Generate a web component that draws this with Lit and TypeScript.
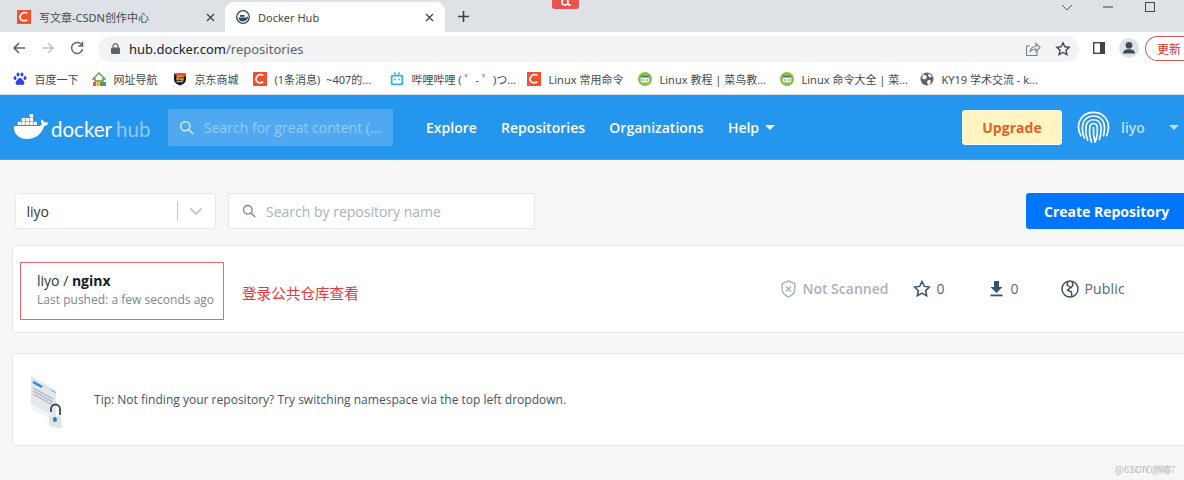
import { LitElement, html, css, svg } from "lit";
import { customElement } from "lit/decorators.js";

const csdn = html`<svg class="fav" viewBox="0 0 14 14"><rect width="14" height="14" fill="#f4502c"/><path d="M10.3 3.4A4.4 4.4 0 0 0 4 4.4c-1.3 1.8-1.2 4 .1 5.3 1.5 1.4 4.4 1.1 6.1 0" fill="none" stroke="#fff" stroke-width="1.7"/></svg>`;
const runoob = html`<svg class="fav" viewBox="0 0 14 14"><circle cx="7" cy="7" r="7" fill="#84c341"/><rect x="2.8" y="3.6" width="8.4" height="6.8" rx="1" fill="#e8eee4"/><rect x="2.8" y="3.6" width="8.4" height="1.8" fill="#566"/><path d="M5.5 7l-1 1 1 1M8.500 7l1 1-1 1" fill="none" stroke="#567" stroke-width=".7"/></svg>`;

const marks: [unknown, string][] = [
  [html`<svg class="fav" viewBox="0 0 14 14" fill="#3146d8"><ellipse cx="2" cy="6" rx="1.500" ry="2"/><ellipse cx="5" cy="2.500" rx="1.500" ry="2"/><ellipse cx="9" cy="2.500" rx="1.500" ry="2"/><ellipse cx="12" cy="6" rx="1.500" ry="2"/><path d="M7 6c-2 0-2.500 2-4 3.500C2 11 3 13.500 5 13c1-.2 3-.2 4 0 2 .5 3-2 2-3.500C9.500 8 9 6 7 6z"/></svg>`, "百度一下"],
  [html`<svg class="fav" viewBox="0 0 14 14"><path d="M1 7l6-6 6 6h-2v2H3V7z" fill="none" stroke="#5b9e3a" stroke-width="1.400"/><rect x="1" y="10" width="3" height="4" fill="#e8554a"/><rect x="4.500" y="10" width="3" height="4" fill="#f3a83c"/><rect x="8" y="10" width="3" height="4" fill="#5b9e3a"/><rect x="11" y="10" width="3" height="4" fill="#3f8fd8"/></svg>`, "网址导航"],
  [html`<svg class="fav" viewBox="0 0 14 14"><path d="M1 1.500h12v6c0 3-3 5-6 6-3-1-6-3-6-6z" fill="#111a3d"/><path d="M1 1.500h12v3L4 5z" fill="#e8452c"/><path d="M10.500 4.500H5L4 7h6l-1 2.500H3.500" fill="none" stroke="#f5a623" stroke-width="1.500"/></svg>`, "京东商城"],
  [csdn, "(1条消息)\u00a0 ~407的..."],
  [html`<svg class="fav" viewBox="0 0 14 14"><rect x=".7" y="2.700" width="12.600" height="10.600" rx="2" fill="#2fb3e6"/><rect x="2.500" y="4.500" width="9" height="7" rx="1" fill="#fff"/><path d="M4 .5l2 2M10 .5l-2 2" stroke="#2fb3e6" stroke-width="1.200"/><circle cx="5" cy="7.500" r=".9" fill="#2fb3e6"/><circle cx="9" cy="7.500" r=".9" fill="#2fb3e6"/></svg>`, "哔哩哔哩 ( ゜- ゜)つ..."],
  [csdn, "Linux 常用命令"],
  [runoob, "Linux 教程 | 菜鸟教..."],
  [runoob, "Linux 命令大全 | 菜..."],
  [html`<svg class="fav" viewBox="0 0 14 14"><circle cx="7" cy="7" r="6.500" fill="#5f6368"/><path d="M3 2.500l3 1 1 2-2 2-3-1zM8 8l3 .5-1 4-2 .5-1-3zM9 1.500l3 3-2 1-2-2z" fill="#fff"/></svg>`, "KY19 学术交流 - k..."],
];

const whale = svg`<svg class="whale" viewBox="0 0 38 27" fill="#fff">
  <path d="M1 12.500h26.500c1.700 0 2.800-.8 3.200-2.300-1.300-1-1.500-3.300-.6-5 1.400.8 2.300 2 2.800 3.400 1.400-.4 3-.2 4.400.7-.7 2-2.500 3.100-4.400 3.200-2.400 7.800-8 13.700-18.400 13.700C6 26.200 .2 20.500 1 12.500z"/>
  <path d="M5 8h3.600v3.400H5zM9.200 8h3.600v3.400H9.200zM13.400 8H17v3.400h-3.600zM17.600 8h3.600v3.400h-3.600zM21.800 8h3.600v3.400h-3.600zM9.200 4h3.600v3.400H9.200zM13.400 4H17v3.400h-3.600zM17.600 4h3.600v3.400h-3.600zM17.600 0h3.600v3.400h-3.600z"/>
</svg>`;

const fingerprint = svg`<svg class="print" viewBox="0 0 34 36" preserveAspectRatio="none" fill="none" stroke="#fff" stroke-width="1.700" stroke-linecap="round">
  <path d="M4 27C1.500 22 1 16 2.500 11.500 5 5 10.500 1.500 17 1.500S29 5 31.500 11.500c1.500 4.500 1 10.500-1 15.500"/>
  <path d="M7.500 29.500C5.500 24 5 18 6.300 13.500 8 8 12 5.500 17 5.500S26 8 27.700 13.500c1 4 .8 8.500-.5 13.500"/>
  <path d="M11 32c-1.700-5-2.400-11-1.500-16 .8-4.300 3.500-6.500 7.500-6.500s6.700 2.200 7.500 6.500c.7 4.500 0 10-1.500 15"/>
  <path d="M15 34c-1.600-5-2.500-11-1.800-16.500.3-2.300 1.700-3.800 3.800-3.800s3.500 1.500 3.800 3.800c.6 5-.2 10.500-1.800 15.500"/>
  <path d="M17 18c-.3 5 .3 11 1.500 16"/>
</svg>`;

const search = (c: string, w: number) => html`<svg class="mag" style="width:${w}px;height:${w}px" viewBox="0 0 18 18" fill="none" stroke=${c} stroke-width="1.800"><circle cx="7.500" cy="7.500" r="5.500"/><path d="M11.500 11.500L16.500 16.500" stroke-linecap="round"/></svg>`;

@customElement("app-root")
export class AppRoot extends LitElement {
  static styles = css`
    :host { display: block; width: 1184px; height: 480px; overflow: hidden; position: relative; background: #f7f7f7; font-family: "Open Sans", "Noto Sans CJK SC", sans-serif; }
    .fav { width: 14px; height: 14px; flex: none; }
    .chrome-text { font-family: "Noto Sans", "Noto Sans CJK SC", sans-serif; }

    .tabs { height: 32px; background: #dee1e6; display: flex; align-items: flex-end; font-size: 11px; color: #45494e; }
    .tab { height: 30px; display: flex; align-items: center; box-sizing: border-box; }
    .t1 { width: 225px; padding: 0 10px 0 17px; gap: 8px; }
    .t2 { width: 220px; padding: 0 11px 0 11px; gap: 8px; background: #fff; border-radius: 9px 9px 0 0; }
    .tab span { flex: 1; white-space: nowrap; }
    .x { width: 9px; height: 9px; flex: none; }
    .plus { width: 13px; height: 13px; margin: 0 0 9px 12px; flex: none; }
    .win { margin-left: auto; align-self: flex-start; display: flex; align-items: center; padding: 2px 29px 0 0; height: 10px; }
    .win .mn { margin: 0 32px 0 30px; }
    .badge { position: absolute; left: 552px; top: -5px; width: 27px; height: 14px; background: #e8534f; border-radius: 3px; display: flex; justify-content: center; }

    .toolbar { height: 32px; background: #fff; display: flex; align-items: center; }
    .nav { display: flex; align-items: center; gap: 13px; padding-left: 11px; width: 98px; box-sizing: border-box; flex: none; }
    .nav svg { width: 16px; height: 16px; flex: none; }
    .addr { width: 981px; height: 26px; margin-top: 1px; border-radius: 13px; background: #f1f3f4; display: flex; align-items: center; padding: 0 8px 0 13px; box-sizing: border-box; font-size: 13px; color: #202124; flex: none; }
    .addr .lock { width: 9px; height: 11px; margin-right: 9px; flex: none; }
    .addr i { font-style: normal; color: #5f6368; }
    .addr .tools { margin-left: auto; display: flex; gap: 14px; align-items: center; }
    .addr .tools svg { width: 16px; height: 16px; }
    .panel { width: 12px; height: 12px; margin-left: 14px; flex: none; }
    .avatar { width: 20px; height: 20px; margin-left: 14px; flex: none; }
    .update { width: 60px; height: 25px; margin: 1px 0 0 6px; flex: none; border: 1px solid #d9534f; border-right: 0; border-radius: 13px 0 0 13px; box-sizing: border-box; font-size: 12px; color: #d93025; padding-left: 11px; display: flex; align-items: center; font-family: "Noto Sans CJK SC", sans-serif; }

    .marks { height: 30px; background: #fff; border-bottom: 1px solid #d3dce3; display: flex; align-items: center; padding-left: 13px; font-size: 11px; color: #45494e; white-space: nowrap; }
    .mark { display: flex; align-items: center; gap: 7.500px; flex: none; }
    .mark:nth-child(1) { width: 79px; } .mark:nth-child(2) { width: 81px; } .mark:nth-child(3) { width: 80px; }
    .mark:nth-child(4) { width: 137px; } .mark:nth-child(5) { width: 137px; } .mark:nth-child(6) { width: 111px; }
    .mark:nth-child(7) { width: 142px; } .mark:nth-child(8) { width: 140px; }

    .hub { height: 65px; background: #2496ed; border-bottom: 1px solid #33a0f5; box-sizing: border-box; display: flex; align-items: center; color: #fff; }
    .logo { display: flex; align-items: center; width: 168px; padding: 0 0 0 13px; box-sizing: border-box; flex: none; height: 100%; }
    .whale { width: 36px; height: 26px; flex: none; margin-right: 2px; }
    .word { font-family: "Lato", sans-serif; font-size: 20.500px; font-weight: 400; margin-top: 3px; white-space: nowrap; }
    .word b { font-weight: 400; color: #8fc8f5; margin-left: 4px; }
    .hubsearch { width: 225px; height: 37px; background: #50a9f0; border-radius: 2px; display: flex; align-items: center; padding-left: 11px; box-sizing: border-box; gap: 10px; color: #94cbf6; font-size: 14px; flex: none; white-space: nowrap; }
    .links { display: flex; gap: 24.300px; font-size: 14px; font-weight: 600; margin-left: 33px; }
    .links span { display: flex; align-items: center; gap: 6px; white-space: nowrap; }
    .caret { width: 0; height: 0; border-left: 5px solid transparent; border-right: 5px solid transparent; border-top: 5px solid currentColor; flex: none; }
    .upgrade { margin: 1px 0 0 auto; width: 100px; height: 35px; background: #fff4c2; border: 1px solid #fff; border-radius: 3px; box-sizing: border-box; color: #df6327; font-size: 14px; font-weight: 700; letter-spacing: .05px; display: flex; align-items: center; justify-content: center; flex: none; }
    .print { width: 33px; height: 33px; margin-left: 15px; flex: none; }
    .user { font-size: 14px; font-weight: 600; color: #bfe0fa; margin-left: 11px; width: 48px; flex: none; }
    .hub > .caret { color: #bfe0fa; margin-right: 5px; }

    .filters { display: flex; align-items: center; padding: 33px 0 16px 15px; height: 36px; }
    .select { width: 201px; height: 36px; background: #fff; border: 1px solid #e6e9ec; border-radius: 4px; box-sizing: border-box; display: flex; align-items: center; padding-left: 10.500px; font-size: 14px; color: #27343e; }
    .select span { flex: 1; }
    .sep { width: 1px; height: 20px; background: #c4c9cd; }
    .select svg { width: 14px; height: 9px; margin: 0 12px 0 11px; }
    .repo-search { width: 307px; height: 36px; margin-left: 12px; background: #fff; border: 1px solid #e6e9ec; box-sizing: border-box; display: flex; align-items: center; padding-left: 13px; gap: 10px; font-size: 14px; color: #a9b3bb; }
    .create { margin-left: auto; width: 158px; height: 36px; background: #0075ff; border-radius: 3px 0 0 3px; color: #fff; font-size: 14px; font-weight: 700; display: flex; align-items: center; padding-left: 18px; box-sizing: border-box; flex: none; white-space: nowrap; }

    .card { margin-left: 12px; width: 1190px; background: #fff; border: 1px solid #e6e9ec; box-sizing: border-box; border-radius: 2px; display: flex; align-items: center; }
    .repo { height: 88px; padding-left: 7px; }
    .box { width: 204px; height: 58px; border: 1px solid #f0666a; box-sizing: border-box; padding: 8px 0 0 16px; flex: none; margin-top: 3px; }
    .name { font-size: 14px; color: #27343e; line-height: 20px; white-space: nowrap; }
    .name b { font-weight: 700; color: #17202a; }
    .pushed { font-size: 12px; color: #7a8790; line-height: 17px; white-space: nowrap; letter-spacing: .02px; }
    .note { color: #f2353a; font-size: 14.600px; margin: 6px 0 0 18px; font-family: "Noto Sans CJK SC", sans-serif; flex: none; }
    .stats { margin-left: auto; display: flex; align-items: center; font-size: 14px; color: #566773; margin-right: 76px; margin-top: -1px; }
    .stat { display: flex; align-items: center; gap: 5px; white-space: nowrap; }
    .stat svg { flex: none; }
    .ns { color: #a9b3bb; font-weight: 600; width: 132px; gap: 6px; }
    .st { width: 77px; } .dl { width: 71px; gap: 7px; }
    .pub span { letter-spacing: .2px; }
    .tip { height: 93px; margin-top: 20px; padding-left: 18px; font-size: 12.040px; color: #45545f; }
    .tipart { width: 34px; height: 52px; margin-right: 29px; flex: none; margin-top: 5px; }

    .wm { position: absolute; left: 1115px; top: 462px; width: 60px; height: 14px; font-size: 9.500px; line-height: 14px; color: #c4c4c4; font-family: "Noto Sans CJK SC", sans-serif; filter: blur(.5px); white-space: nowrap; }
    .wm span { position: absolute; left: 0; top: 0; }
  `;

  render() {
    return html`
      <div class="tabs chrome-text">
        <div class="tab t1">${csdn}<span>写文章-CSDN创作中心</span>
          <svg class="x" viewBox="0 0 9 9" stroke="#3c4043" stroke-width="1.300"><path d="M1 1l7 7M8 1L1 8"/></svg></div>
        <div class="tab t2">
          <svg class="fav" viewBox="0 0 14 14"><circle cx="7" cy="7" r="6.300" fill="#fff" stroke="#2c4a63" stroke-width="1.300"/><path d="M2.500 7.500h7.500c.6 0 1-.4 1.200-1l1 .6c-.6 2.700-2.500 4.400-5.200 4.400-2.500 0-4.300-1.500-4.500-4z" fill="#2c4a63"/><rect x="4" y="5" width="4.500" height="1.800" fill="#2c4a63"/></svg>
          <span>Docker Hub</span>
          <svg class="x" viewBox="0 0 9 9" stroke="#3c4043" stroke-width="1.300"><path d="M1 1l7 7M8 1L1 8"/></svg></div>
        <svg class="plus" viewBox="0 0 13 13" stroke="#3c4043" stroke-width="1.600"><path d="M6.500 1v11M1 6.500h11"/></svg>
        <div class="win">
          <svg width="12" height="7" viewBox="0 0 12 7" fill="none" stroke="#555"><path d="M1 1l5 5 5-5"/></svg>
          <svg class="mn" width="10" height="2" viewBox="0 0 10 2"><path d="M0 1h10" stroke="#555" stroke-width="1.200"/></svg>
          <svg width="10" height="10" viewBox="0 0 10 10" fill="none" stroke="#444"><rect x=".5" y=".5" width="9" height="9"/></svg>
        </div>
      </div>
      <div class="badge">
        <svg width="12" height="13" viewBox="0 0 12 13" fill="none" stroke="#fff" stroke-width="1.500"><circle cx="5" cy="7" r="3"/><path d="M7.500 9l3 1.500"/></svg>
      </div>

      <div class="toolbar chrome-text">
        <div class="nav">
          <svg viewBox="0 0 16 16" fill="none" stroke="#5f6368" stroke-width="1.500"><path d="M14 8H3M8 3L3 8l5 5"/></svg>
          <svg viewBox="0 0 16 16" fill="none" stroke="#c0c3c7" stroke-width="1.500"><path d="M2 8h11M8 3l5 5-5 5"/></svg>
          <svg viewBox="0 0 16 16" fill="none" stroke="#5f6368" stroke-width="1.500"><path d="M13 5.500A5.500 5.500 0 1 0 13.500 9"/><path d="M13.500 1.800v4.200H9.300" /></svg>
        </div>
        <div class="addr">
          <svg class="lock" viewBox="0 0 9 11"><path d="M2 5V3.200a2.500 2.500 0 0 1 5 0V5" fill="none" stroke="#5f6368" stroke-width="1.200"/><rect y="4.500" width="9" height="6.500" rx="1" fill="#5f6368"/></svg>
          <span>hub.docker.com<i>/repositories</i></span>
          <div class="tools">
            <svg viewBox="0 0 16 16" fill="none" stroke="#7c8186" stroke-width="1.100"><path d="M12 10v4.500H1.500V5H5"/><path d="M5 11c.3-3.500 3-5.500 6-5.500V2.500L15 6.500l-4 4V8c-2.500 0-4.800.8-6 3z"/></svg>
            <svg viewBox="0 0 16 16" fill="none" stroke="#45494e" stroke-width="1.400"><path d="M8 1.800l1.900 4 4.300.5-3.200 3 .9 4.300L8 11.500l-3.900 2.100.9-4.300-3.200-3 4.300-.5z"/></svg>
          </div>
        </div>
        <svg class="panel" viewBox="0 0 12 12"><rect x=".7" y=".7" width="10.600" height="10.600" fill="#fff" stroke="#444" stroke-width="1.400"/><rect x="7" y="1" width="4.500" height="10" fill="#444"/></svg>
        <svg class="avatar" viewBox="0 0 18 18"><circle cx="9" cy="9" r="9" fill="#dee1e6"/><circle cx="9" cy="6.500" r="3" fill="#3c4a5a"/><path d="M3.500 14c.3-2.700 2.500-3.800 5.500-3.800s5.200 1.100 5.500 3.800z" fill="#3c4a5a"/></svg>
        <div class="update">更新</div>
      </div>

      <div class="marks chrome-text">
        ${marks.map(([icon, label]) => html`<div class="mark">${icon}<span>${label}</span></div>`)}
      </div>

      <div class="hub">
        <div class="logo">${whale}<span class="word">docker<b>hub</b></span></div>
        <div class="hubsearch">${search("#d4eafb", 15)}<span>Search for great content (...</span></div>
        <div class="links">
          <span>Explore</span><span>Repositories</span><span>Organizations</span>
          <span>Help <div class="caret"></div></span>
        </div>
        <div class="upgrade">Upgrade</div>
        ${fingerprint}
        <div class="user">liyo</div>
        <div class="caret"></div>
      </div>

      <div class="filters">
        <div class="select"><span>liyo</span><div class="sep"></div>
          <svg viewBox="0 0 14 9" fill="none" stroke="#c4c9cd" stroke-width="2"><path d="M1.500 1.500L7 7l5.500-5.500"/></svg></div>
        <div class="repo-search">${search("#7f8b94", 14)}<span>Search by repository name</span></div>
        <div class="create">Create Repository</div>
      </div>

      <div class="card repo">
        <div class="box">
          <div class="name">liyo / <b>nginx</b></div>
          <div class="pushed">Last pushed: a few seconds ago</div>
        </div>
        <div class="note">登录公共仓库查看</div>
        <div class="stats">
          <div class="stat ns">
            <svg width="15" height="18" viewBox="0 0 15 18" fill="none" stroke="#a9b3bb" stroke-width="1.400"><path d="M7.500 1l6.300 2.500v6c0 3.500-3 6-6.300 7.500-3.300-1.500-6.300-4-6.300-7.500v-6z"/><path d="M5 6.500l5 5M10 6.500l-5 5"/></svg>
            <span>Not Scanned</span></div>
          <div class="stat st">
            <svg width="18" height="17" viewBox="0 0 18 17" fill="none" stroke="#3c5266" stroke-width="1.500"><path d="M9 1.500l2.300 4.900 5.200.6-3.800 3.600 1 5.200L9 13.200l-4.700 2.600 1-5.200L1.500 7l5.200-.6z"/></svg>
            <span>0</span></div>
          <div class="stat dl">
            <svg width="13" height="16" viewBox="0 0 13 16" fill="#3c5266"><path d="M4 0h5v6h3.500L6.500 12 .5 6H4z"/><rect x=".5" y="13.500" width="12" height="1.800"/></svg>
            <span>0</span></div>
          <div class="stat pub">
            <svg width="18" height="18" viewBox="0 0 18 18" fill="none" stroke="#3c5266" stroke-width="1.500"><circle cx="9" cy="9" r="8"/><path d="M7 1.500L6 5l3.500 2.500L6.500 10l4 2 .3 4.500M11 1.500l1 3.500-2 3" stroke-width="1.400"/></svg>
            <span>Public</span></div>
        </div>
      </div>

      <div class="card tip">
        <svg class="tipart" viewBox="0 0 34 52">
          <path d="M0 0l25 14v28L0 28z" fill="#e4e8ec"/>
          <path d="M1 4l24 13" stroke="#cfd5da" fill="none"/>
          <path d="M2 6l9 5" stroke="#1d8bf0" stroke-width="2.200"/>
          <path d="M20 14l5 2.800" stroke="#7aa9d6" stroke-width="1"/>
          <path d="M2 12l20 11M2 15l20 11M2 18l20 11" stroke="#aab2ba" stroke-width="1.300"/>
          <path d="M1 28l16 10v4L1 33z" fill="#f2f4f5"/>
          <path d="M20 36v-3a4.500 4.500 0 0 1 9 0v6" fill="none" stroke="#34495c" stroke-width="1.800"/>
          <path d="M18 38l12 2.500 1 12-13-2.500z" fill="#dfe4e9"/>
          <path d="M24 41a2 2.500 0 1 1-.1 5 2 2.500 0 0 1 .1-5z" fill="#2c7fd0"/>
        </svg>
        <span>Tip: Not finding your repository? Try switching namespace via the top left dropdown.</span>
      </div>
      <div class="wm"><span>@CSDN @407</span><span>@51CTO博客</span></div>
    `;
  }
}
